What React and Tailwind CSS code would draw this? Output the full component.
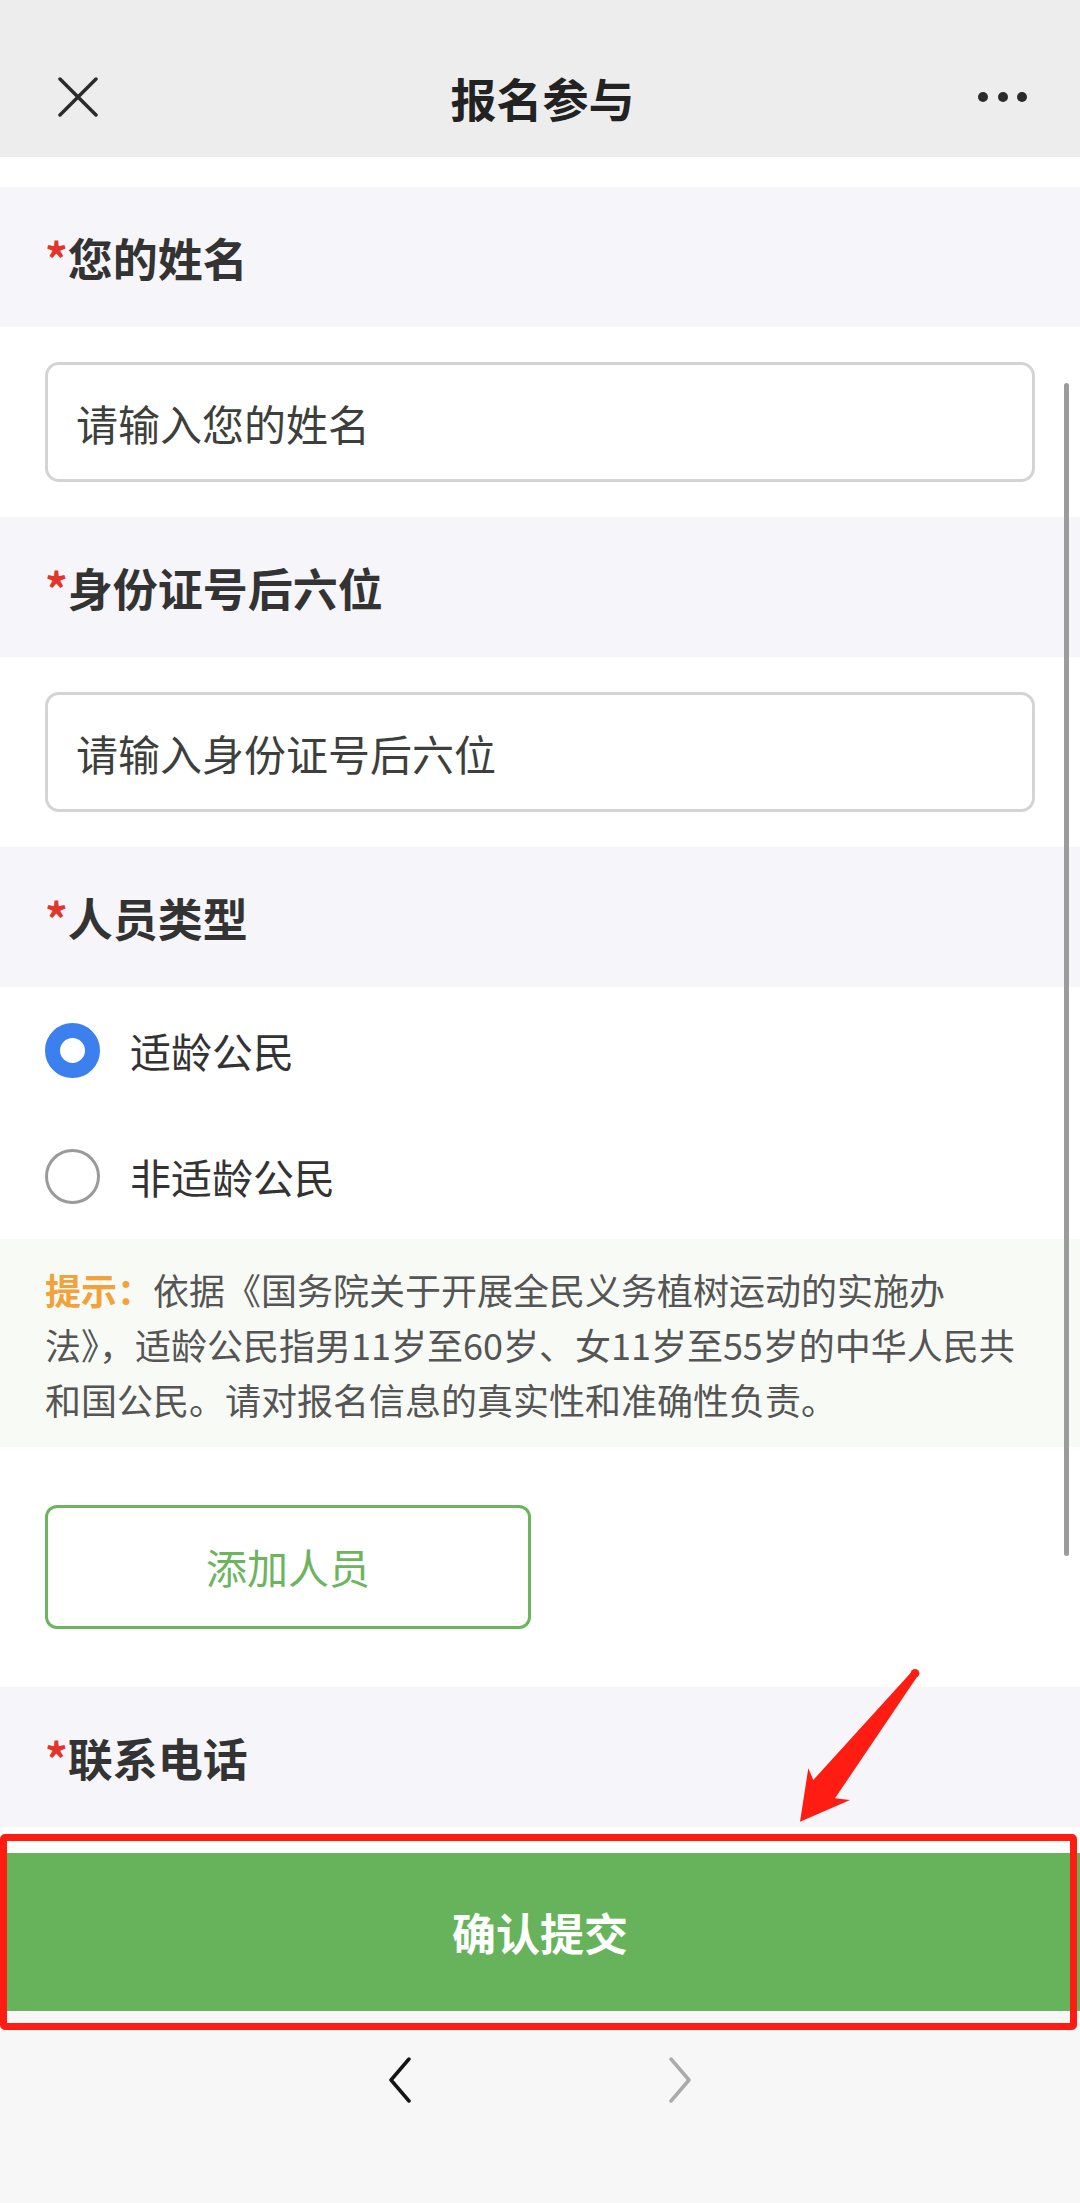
import React from 'react';

const FONT = { fontFamily: '"Noto Sans CJK SC", "Noto Sans", sans-serif' };

const Label = ({ children }) => (
  <div className="h-[140px] bg-[#f6f6fa] flex items-center px-[45px]">
    <span className="text-[45px] font-bold text-[#333] leading-none">
      <span className="text-[#e2362c]">*</span>
      {children}
    </span>
  </div>
);

const TextField = ({ placeholder }) => (
  <div className="h-[190px] bg-white flex items-center px-[45px]">
    <input
      type="text"
      placeholder={placeholder}
      className="w-[990px] h-[120px] rounded-[14px] border-[3px] border-[#d4d4d4] bg-white pl-[28px] text-[42px] text-[#333] placeholder:text-[#3d3f3d] outline-none"
    />
  </div>
);

const Radio = ({ checked, label }) => (
  <div className="h-[126px] flex items-center px-[45px] gap-[30px]">
    {checked ? (
      <span className="w-[55px] h-[55px] rounded-full border-[15px] border-[#3b80ee] bg-white" />
    ) : (
      <span className="w-[55px] h-[55px] rounded-full border-[3px] border-[#9a9a9a] bg-white" />
    )}
    <span className="text-[41px] text-[#333] leading-none">{label}</span>
  </div>
);

export default function App() {
  return (
    <div className="relative w-[1080px] h-[2203px] overflow-hidden bg-[#f7f7f7]" style={FONT}>
      {/* top bar */}
      <header className="h-[157px] bg-[#ededed] grid grid-cols-[1fr_auto_1fr] items-center pt-[36px] px-[58px] pr-[53px]">
        <svg width="40" height="40" viewBox="0 0 40 40" className="justify-self-start">
          <path d="M2 2 L38 38 M38 2 L2 38" stroke="#2b2b2b" strokeWidth="3.5" strokeLinecap="round" />
        </svg>
        <h1 className="text-[46px] font-bold text-[#222] leading-none">报名参与</h1>
        <div className="justify-self-end flex items-center gap-[9.5px]">
          <span className="w-[10px] h-[10px] rounded-full bg-[#2b2b2b]" />
          <span className="w-[10px] h-[10px] rounded-full bg-[#2b2b2b]" />
          <span className="w-[10px] h-[10px] rounded-full bg-[#2b2b2b]" />
        </div>
      </header>

      <main className="bg-white">
        <div className="h-[30px]" />
        <Label>您的姓名</Label>
        <TextField placeholder="请输入您的姓名" />
        <Label>身份证号后六位</Label>
        <TextField placeholder="请输入身份证号后六位" />
        <Label>人员类型</Label>

        <div className="h-[252px]">
          <Radio checked label="适龄公民" />
          <Radio label="非适龄公民" />
        </div>

        <div className="h-[208px] bg-[#f8fbf5] px-[45px] pt-[23px] text-[36px] leading-[55px] text-[#555]">
          <div className="whitespace-nowrap">
            <span className="text-[#f2a23a] font-bold">提示：</span>依据《国务院关于开展全民义务植树运动的实施办
          </div>
          <div className="whitespace-nowrap">法》，适龄公民指男11岁至60岁、女11岁至55岁的中华人民共</div>
          <div className="whitespace-nowrap">和国公民。请对报名信息的真实性和准确性负责。</div>
        </div>

        <div className="h-[240px] flex items-center px-[45px]">
          <button className="w-[486px] h-[124px] rounded-[12px] border-[3px] border-[#6cb45e] bg-white text-[41px] text-[#6cb45e]">
            添加人员
          </button>
        </div>

        <Label>联系电话</Label>
      </main>

      {/* fixed submit bar */}
      <div className="bg-white pt-[26px]">
        <button className="w-full h-[158px] bg-[#67b35b] text-white text-[44px] font-bold">确认提交</button>
      </div>

      {/* browser toolbar */}
      <div className="flex justify-center gap-[256px] pt-[46px]">
        <svg width="24" height="46" viewBox="0 0 24 46">
          <path d="M21 2 L3 23 L21 44" fill="none" stroke="#151515" strokeWidth="3.5" strokeLinecap="round" strokeLinejoin="round" />
        </svg>
        <svg width="24" height="46" viewBox="0 0 24 46">
          <path d="M3 2 L21 23 L3 44" fill="none" stroke="#ababab" strokeWidth="3.5" strokeLinecap="round" strokeLinejoin="round" />
        </svg>
      </div>

      {/* scrollbar */}
      <div className="absolute left-[1064px] top-[383px] w-[5px] h-[1173px] rounded-full bg-[#9c9c9c]" />

      {/* annotation: red frame */}
      <div className="absolute left-0 top-[1834px] w-[1077px] h-[196px] border-[7px] border-[#ff1c13] rounded-[5px] pointer-events-none" />

      {/* annotation: arrow */}
      <svg className="absolute left-0 top-0 pointer-events-none" width="1080" height="2203" viewBox="0 0 1080 2203">
        <polygon
          points="911.7,1671.7 813.3,1780 808.3,1768.3 800,1821.7 850,1800 835,1798.3 918.3,1675"
          fill="#ff1c13"
        />
        <circle cx="915" cy="1673.3" r="4.3" fill="#ff1c13" />
      </svg>
    </div>
  );
}
